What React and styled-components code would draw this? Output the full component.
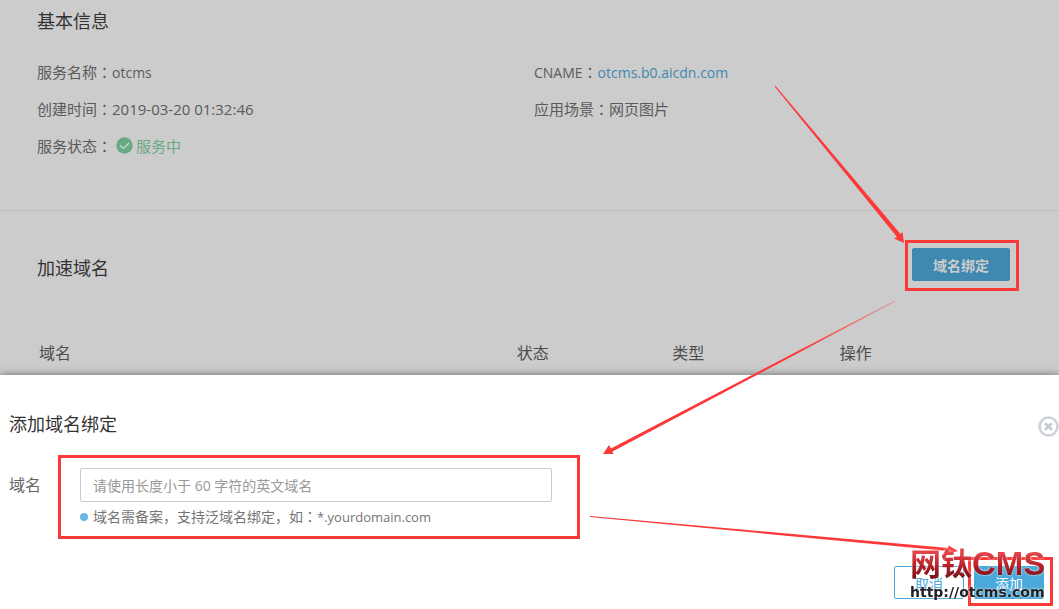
import React from 'react'
import styled, { createGlobalStyle } from 'styled-components'

const GlobalStyle = createGlobalStyle`
  * {
    box-sizing: border-box;
  }

  body {
    margin: 0;
    background: #ffffff;
    color: #5b5b5b;
    font-family: 'Open Sans', 'Noto Sans CJK SC', sans-serif;
    font-size: 15px;
  }

  button,
  input {
    font-family: inherit;
  }
`

const Page = styled.div`
  position: relative;
  display: flex;
  flex-direction: column;
  min-height: 100vh;
  overflow: hidden;
`

const Backdrop = styled.main`
  background: #cccccc;
`

const Section = styled.section`
  padding: ${({ $padding }) => $padding};
  border-bottom: ${({ $divided }) => ($divided ? '1px solid #bdbdbd' : 'none')};
`

const Title = styled.h2`
  margin: 0;
  font-size: 18px;
  font-weight: 400;
  line-height: 26px;
  color: #333333;
`

const InfoGrid = styled.dl`
  display: grid;
  grid-template-columns: 1fr 1fr;
  column-gap: 9px;
  margin: 19px 0 0;
`

const InfoItem = styled.div`
  display: flex;
  align-items: center;
  height: 37px;

  dt,
  dd {
    margin: 0;
    white-space: nowrap;
  }
`

const Colon = styled.span`
  font-family: 'Noto Sans CJK TC', sans-serif;
  font-size: ${({ $size }) => $size};
`

const Latin = styled.span`
  font-size: ${({ $size }) => $size};
`

const Link = styled.a`
  color: #3f88b0;
  text-decoration: none;
`

const Status = styled.span`
  display: flex;
  align-items: center;
  gap: 3px;
  padding-left: 4px;
  color: #68aa83;
`

const SectionHead = styled.div`
  display: flex;
  align-items: flex-end;
  justify-content: space-between;
  padding-right: 12px;
`

const Marked = styled.div`
  position: relative;
`

const Mark = styled.span`
  position: absolute;
  inset: ${({ $inset }) => $inset};
  border: 3px solid #fd3838;
  pointer-events: none;
`

const Button = styled.button`
  display: block;
  width: ${({ $wide }) => ($wide ? '98px' : '70px')};
  height: 33px;
  padding: 0;
  border: 1px solid ${({ $line }) => $line};
  border-radius: 2px;
  background: ${({ $fill }) => $fill};
  color: ${({ $ink }) => $ink};
  font-size: 14px;
  font-weight: ${({ $wide }) => ($wide ? 700 : 400)};
`

const Table = styled.table`
  width: 100%;
  margin-top: 55px;
  border-collapse: collapse;
  table-layout: fixed;

  th {
    padding: 0 2px;
    font-size: 16px;
    font-weight: 400;
    line-height: 34px;
    text-align: left;
    color: #4d4d4d;
  }
`

const Drawer = styled.section`
  position: relative;
  flex: 1;
  padding: 36px 0 10px 9px;
  background: #ffffff;
  box-shadow: 0 0 8px rgba(0, 0, 0, 0.5);
`

const DrawerHead = styled.header`
  display: flex;
  align-items: flex-end;
  justify-content: space-between;
`

const CloseButton = styled.button`
  display: flex;
  padding: 0;
  border: 0;
  background: none;
`

const FormRow = styled.div`
  display: flex;
  align-items: flex-start;
  margin-top: 31px;
`

const Label = styled.label`
  width: 71px;
  font-size: 16px;
  line-height: 34px;
  color: #666666;
`

const Input = styled.input`
  display: block;
  width: 472px;
  height: 34px;
  padding: 0 12px;
  border: 1px solid #cccccc;
  border-radius: 2px;
  font-size: 14px;
  color: #555555;

  &::placeholder {
    color: #999999;
    opacity: 1;
  }
`

const Hint = styled.p`
  display: flex;
  align-items: center;
  gap: 5px;
  margin: 4px 0 0;
  font-size: 14px;
  line-height: 20px;
  color: #757575;

  &::before {
    content: '';
    width: 8px;
    height: 8px;
    border-radius: 50%;
    background: #6cb5de;
  }
`

const Actions = styled.footer`
  display: flex;
  justify-content: flex-end;
  gap: 10px;
  margin-top: 39px;
  padding-right: 15px;
`

const Arrows = styled.svg`
  position: absolute;
  top: 0;
  left: 0;
  pointer-events: none;
`

const Watermark = styled.div`
  position: absolute;
  right: 12px;
  bottom: 8px;
  width: 137px;
  pointer-events: none;
  white-space: nowrap;
  filter: drop-shadow(0 0 1px #ffffff);
`

const WatermarkName = styled.div`
  background: linear-gradient(#e0454a 20%, #b41f27 55%, #6d1018 90%);
  background-clip: text;
  color: transparent;
  font-family: 'Liberation Sans', 'Noto Sans CJK SC', sans-serif;
  font-size: 33px;
  font-weight: 700;
  line-height: 36px;

  span {
    font-size: 31px;
  }
`

const WatermarkUrl = styled.div`
  font-family: 'DejaVu Sans', sans-serif;
  font-size: 14px;
  font-weight: 700;
  line-height: 18px;
  color: #222222;
`

const CheckIcon = () => (
  <svg width='17' height='17' viewBox='0 0 17 17' aria-hidden='true'>
    <circle cx='8.5' cy='8.5' r='8.2' fill='#68aa83' />
    <path d='M4 8.2l3.4 3.2 5.6-5.4' fill='none' stroke='#d4d4d4' strokeWidth='1.4' />
  </svg>
)

const CloseIcon = () => (
  <svg width='21' height='21' viewBox='0 0 21 21' aria-hidden='true'>
    <circle cx='10.5' cy='10.5' r='9' fill='none' stroke='#cdd2d9' strokeWidth='2.6' />
    <path d='M7 7.2l7 6.6M14 7.2l-7 6.6' stroke='#c3c9d1' strokeWidth='2.6' />
  </svg>
)

const Info = ({ label, children }) => (
  <InfoItem>
    <dt>
      {label}
      <Colon $size='15px'>：</Colon>
    </dt>
    <dd>{children}</dd>
  </InfoItem>
)

const App = () => {
  return (
    <Page>
      <GlobalStyle />
      <Backdrop>
        <Section $padding='8px 37px 46px' $divided>
          <Title>基本信息</Title>
          <InfoGrid>
            <Info label='服务名称'>
              <Latin $size='14px'>otcms</Latin>
            </Info>
            <Info label={<Latin $size='14px'>CNAME</Latin>}>
              <Link href='#cname'>
                <Latin $size='14px'>otcms.b0.aicdn.com</Latin>
              </Link>
            </Info>
            <Info label='创建时间'>2019-03-20 01:32:46</Info>
            <Info label='应用场景'>网页图片</Info>
            <Info label='服务状态'>
              <Status>
                <CheckIcon />
                服务中
              </Status>
            </Info>
          </InfoGrid>
        </Section>
        <Section $padding='37px 37px 5px'>
          <SectionHead>
            <Title>加速域名</Title>
            <Marked>
              <Button type='button' $wide $fill='#3f88b0' $line='#3f88b0' $ink='#cccccc'>
                域名绑定
              </Button>
              <Mark $inset='-8px -9px -10px -7px' />
            </Marked>
          </SectionHead>
          <Table>
            <colgroup>
              <col width='48.5%' />
              <col width='15.8%' />
              <col width='17%' />
              <col />
            </colgroup>
            <thead>
              <tr>
                <th scope='col'>域名</th>
                <th scope='col'>状态</th>
                <th scope='col'>类型</th>
                <th scope='col'>操作</th>
              </tr>
            </thead>
          </Table>
        </Section>
      </Backdrop>

      <Drawer>
        <DrawerHead>
          <Title>添加域名绑定</Title>
          <CloseButton type='button' aria-label='关闭'>
            <CloseIcon />
          </CloseButton>
        </DrawerHead>
        <FormRow>
          <Label htmlFor='domain'>域名</Label>
          <Marked>
            <Input id='domain' type='text' placeholder='请使用长度小于 60 字符的英文域名' />
            <Hint>
              <span>
                域名需备案，支持泛域名绑定，如<Colon $size='14px'>：</Colon>
                <Latin $size='13px'>*.yourdomain.com</Latin>
              </span>
            </Hint>
            <Mark $inset='-13px -28px -12px -22px' />
          </Marked>
        </FormRow>
        <Actions>
          <Button type='button' $fill='#ffffff' $line='#4aa8da' $ink='#4aa8da'>
            取消
          </Button>
          <Marked>
            <Button type='button' $fill='#4aa8da' $line='#4aa8da' $ink='#ffffff'>
              添加
            </Button>
            <Mark $inset='-9px -9px -7px -6px' />
          </Marked>
        </Actions>
      </Drawer>

      <Arrows width='1059' height='609' viewBox='0 0 1059 609' fill='#fd3838' aria-hidden='true'>
        <defs>
          <linearGradient id='fade' gradientUnits='userSpaceOnUse' x1='895' y1='301' x2='800' y2='350'>
            <stop offset='0' stopColor='#fd3838' stopOpacity='0.3' />
            <stop offset='1' stopColor='#fd3838' />
          </linearGradient>
        </defs>
        <path d='M774.6 86.6L775.4 85.8L900.5 234L902.5 232L904 243L894 238.5L897 237Z' />
        <path d='M894.8 300.6L895.2 301.6L612.5 451.5L613.5 454L603 454L609 445L611 448.5Z' fill='url(#fade)' />
        <path d='M590 515.9L948 548L948.5 545.5L958 551L947.5 554L948 551L590 517.1Z' />
      </Arrows>

      <Watermark>
        <WatermarkName>
          <span>网钛</span>CMS
        </WatermarkName>
        <WatermarkUrl>http://otcms.com</WatermarkUrl>
      </Watermark>
    </Page>
  )
}

export default App
